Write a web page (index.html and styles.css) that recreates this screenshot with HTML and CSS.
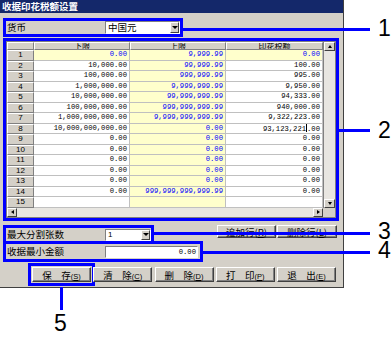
FILE: index.html
```html
<!DOCTYPE html>
<html lang="zh-CN">
<head>
  <meta charset="UTF-8">
  <title>收据印花税额设置</title>
  <link rel="stylesheet" href="styles.css">
</head>
<body>
  <div class="page">
    <div class="window">
      <div class="titlebar">收据印花税额设置</div>
      <div class="content">
        <div class="field field-currency">
          <label>货币</label>
          <div class="combo"><span>中国元</span><i class="drop"></i></div>
        </div>

        <div class="sheet">
          <div class="sheet-main">
            <div class="cells">
              <div class="row head"><div class="rh"></div><div class="ch">下限</div><div class="ch">上限</div><div class="ch last">印花税额</div></div>
              <div class="row"><div class="rh">1</div><div class="c y">0.00</div><div class="c y">9,999.99</div><div class="c y last">0.00</div></div>
              <div class="row"><div class="rh">2</div><div class="c">10,000.00</div><div class="c y">99,999.99</div><div class="c last">100.00</div></div>
              <div class="row"><div class="rh">3</div><div class="c">100,000.00</div><div class="c y">999,999.99</div><div class="c last">995.00</div></div>
              <div class="row"><div class="rh">4</div><div class="c">1,000,000.00</div><div class="c y">9,999,999.99</div><div class="c last">9,950.00</div></div>
              <div class="row"><div class="rh">5</div><div class="c">10,000,000.00</div><div class="c y">99,999,999.99</div><div class="c last">94,333.00</div></div>
              <div class="row"><div class="rh">6</div><div class="c">100,000,000.00</div><div class="c y">999,999,999.99</div><div class="c last">940,000.00</div></div>
              <div class="row"><div class="rh">7</div><div class="c">1,000,000,000.00</div><div class="c y">9,999,999,999.99</div><div class="c last">9,322,223.00</div></div>
              <div class="row"><div class="rh">8</div><div class="c">10,000,000,000.00</div><div class="c y">0.00</div><div class="c last">93,123,221<span class="caret"></span>.00</div></div>
              <div class="row"><div class="rh">9</div><div class="c">0.00</div><div class="c y">0.00</div><div class="c last">0.00</div></div>
              <div class="row"><div class="rh">10</div><div class="c">0.00</div><div class="c y">0.00</div><div class="c last">0.00</div></div>
              <div class="row"><div class="rh">11</div><div class="c">0.00</div><div class="c y">0.00</div><div class="c last">0.00</div></div>
              <div class="row"><div class="rh">12</div><div class="c">0.00</div><div class="c y">0.00</div><div class="c last">0.00</div></div>
              <div class="row"><div class="rh">13</div><div class="c">0.00</div><div class="c y">0.00</div><div class="c last">0.00</div></div>
              <div class="row"><div class="rh">14</div><div class="c">0.00</div><div class="c y">999,999,999,999.99</div><div class="c last">0.00</div></div>
              <div class="row"><div class="rh">15</div><div class="c"></div><div class="c y"></div><div class="c last"></div></div>
            </div>
            <div class="vscroll"><i class="sb up"></i><i class="track"></i><i class="sb down"></i></div>
          </div>
          <div class="hscroll"><i class="sb left"></i><i class="track"></i><i class="sb right"></i><i class="corner"></i></div>
        </div>

        <div class="row-a">
          <div class="field field-max">
            <label>最大分割张数</label>
            <div class="combo"><span>1</span><i class="drop"></i></div>
          </div>
          <div class="row-btns">
            <button class="btn small">追加行(<u>R</u>)</button>
            <button class="btn small wide">删除行(<u>L</u>)</button>
          </div>
        </div>

        <div class="field field-min">
          <label>收据最小金额</label>
          <div class="input">0.00</div>
        </div>

        <div class="actions">
          <button class="btn marked">保　存<span class="key">(<u>S</u>)</span></button>
          <button class="btn">清　除<span class="key">(<u>C</u>)</span></button>
          <button class="btn">删　除<span class="key">(<u>D</u>)</span></button>
          <button class="btn">打　印<span class="key">(<u>P</u>)</span></button>
          <button class="btn">退　出<span class="key">(<u>E</u>)</span></button>
        </div>
      </div>
    </div>

    <!-- callouts -->
    <div class="callout line-1"></div>
    <div class="callout line-2"></div>
    <div class="callout line-3"></div>
    <div class="callout line-4"></div>
    <div class="callout line-5"></div>
    <div class="num num-1">1</div>
    <div class="num num-2">2</div>
    <div class="num num-3">3</div>
    <div class="num num-4">4</div>
    <div class="num num-5">5</div>
  </div>
</body>
</html>
```

FILE: styles.css
```css
* { box-sizing: border-box; }
body { margin: 0; background: #fff; color: #000; font-family: "Noto Sans CJK SC", "Liberation Sans", sans-serif; font-size: 9.5px; }
.page { position: relative; width: 391px; height: 339px; overflow: hidden; }

.window { width: 344px; background: #d4d0c8; border-right: 1px solid #404040; border-bottom: 1px solid #404040; padding-bottom: 5px; }
.titlebar { height: 13px; line-height: 13px; padding-left: 2px; background: #14286a; color: #fff; font-weight: bold; font-size: 9.5px; }
.content { padding: 8px 0 0 6px; }

/* labelled fields with blue marks */
.field { display: flex; align-items: center; outline: 3px solid #0000ff; }
.field label { width: 99px; padding-left: 1px; line-height: 1; }
.field-currency { width: 174px; height: 13px; }
.field-max { width: 145px; height: 13px; margin-top: 3px; }
.field-min { width: 194px; height: 15px; margin-top: 3px; }

.combo { flex: 1; height: 13px; display: flex; align-items: stretch; background: #fff; border: 1px solid; border-color: #808080 #fff #fff #808080; }
.combo span { flex: 1; padding-left: 2px; line-height: 11px; }
.field-max .combo { height: 12px; }
.field-max .combo span { font: 8px/10px "Liberation Sans", sans-serif; }
.drop { width: 9px; background: #d4d0c8; border: 1px solid; border-color: #fff #404040 #404040 #fff; display: flex; align-items: center; justify-content: center; }
.drop::after { content: ""; border-left: 3px solid transparent; border-right: 3px solid transparent; border-top: 3px solid #000; }

.input { width: 93px; height: 12px; background: #fff; border: 1px solid; border-color: #808080 #fff #fff #808080; text-align: right; padding-right: 1px; font: 7.2px/10px "Liberation Mono", monospace; }

/* grid */
.sheet { width: 330px; height: 177px; margin-top: 7px; border: 1px solid #808080; background: #fff; outline: 3px solid #0000ff; }
.sheet-main { display: flex; height: 165.5px; }
.cells { width: 316px; }
.row { display: flex; height: 10.5px; }
.row.head { height: 8px; }
.rh { width: 27px; background: #d4d0c8; border: 1px solid; border-color: #fff #808080 #808080 #fff; text-align: center; font: 8px/8.5px "Liberation Sans", sans-serif; }
.ch { width: 96px; background: #d4d0c8; border: 1px solid; border-color: #fff #808080 #808080 #fff; text-align: center; font-size: 8px; line-height: 6px; overflow: hidden; }
.c { width: 96px; border-right: 1px solid #c0c0c0; border-bottom: 1px solid #c0c0c0; text-align: right; padding-right: 2px; font: 7.2px/9.5px "Liberation Mono", monospace; background: #fff; white-space: nowrap; }
.c.y { background: #ffffcc; color: #0000ff; }
.c.last, .ch.last { width: 97px; }
.caret { display: inline-block; width: 0; height: 8px; border-left: 1px solid #000; vertical-align: -1px; }

.sb { display: flex; align-items: center; justify-content: center; background: #d4d0c8; border: 1px solid; border-color: #fff #404040 #404040 #fff; }
.sb::after { content: ""; border: 2.5px solid transparent; }
.up::after { border-bottom: 3px solid #000; border-top-width: 0; }
.down::after { border-top: 3px solid #000; border-bottom-width: 0; }
.left::after { border-right: 3px solid #000; border-left-width: 0; }
.right::after { border-left: 3px solid #000; border-right-width: 0; }
.track { flex: 1; background: #e8e6e1; }
.vscroll { width: 12px; display: flex; flex-direction: column; border-left: 1px solid #808080; }
.vscroll .sb { height: 9px; }
.hscroll { display: flex; height: 9.5px; }
.hscroll .sb { width: 10px; }
.corner { width: 12px; background: #d4d0c8; }

/* buttons */
.row-a { display: flex; justify-content: space-between; align-items: flex-start; width: 331px; margin-top: 7px; }
.row-btns { display: flex; gap: 1px; }
.btn { width: 59px; height: 15px; padding: 0; background: #d4d0c8; border: 1px solid; border-color: #fff #404040 #404040 #fff; box-shadow: inset -1px -1px 0 #808080; font-family: "Noto Sans CJK SC", sans-serif; font-size: 9.5px; line-height: 12px; color: #000; }
.btn.small { height: 13px; line-height: 10px; }
.btn.wide { width: 60px; }
.key { font: 7.5px "Liberation Sans", sans-serif; }
.actions { display: flex; gap: 2.25px; margin-top: 8px; padding-left: 26px; }
.marked { outline: 3px solid #0000ff; outline-offset: 1px; }

/* annotation callouts */
.callout { position: absolute; background: #0000ff; }
.line-1 { left: 183px; top: 28px; width: 187px; height: 3px; }
.line-2 { left: 339px; top: 129px; width: 31px; height: 3px; }
.line-3 { left: 154px; top: 232px; width: 216px; height: 3px; }
.line-4 { left: 203px; top: 251px; width: 167px; height: 3px; }
.line-5 { left: 60px; top: 287px; width: 3px; height: 23px; }
.num { position: absolute; font: 23px/17px "Liberation Sans", Arial, sans-serif; }
.num-1 { left: 378px; top: 20px; }
.num-2 { left: 378px; top: 122px; }
.num-3 { left: 378px; top: 223px; }
.num-4 { left: 378px; top: 242px; }
.num-5 { left: 54px; top: 315px; }
```
